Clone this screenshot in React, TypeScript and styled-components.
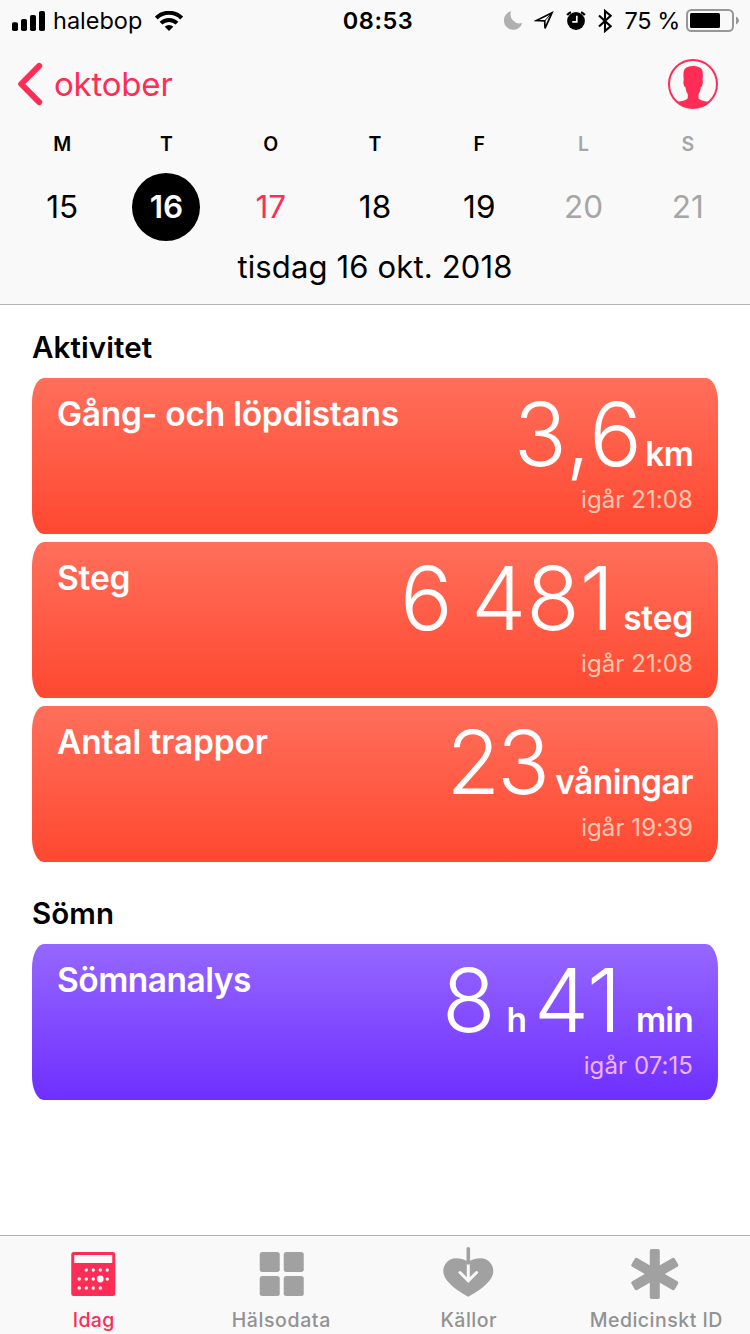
import React from "react";
import styled, { createGlobalStyle } from "styled-components";

const PINK = "#ff2d55";
const GRAY = "#a1a1a1";

const GlobalStyle = createGlobalStyle`
  * { box-sizing: border-box; }
  body {
    margin: 0;
    background: #fff;
    color: #000;
    font-family: Inter, "Liberation Sans", sans-serif;
  }
`;

const Screen = styled.div`
  width: 750px;
  height: 1334px;
  display: flex;
  flex-direction: column;
  overflow: hidden;
  background: #fff;
`;

const Header = styled.header`
  height: 305px;
  flex: none;
  background: #f9f9f9;
  border-bottom: 1px solid #b2b2b2;
`;

const StatusBar = styled.div`
  height: 40px;
  padding: 0 11px 0 12px;
  display: grid;
  grid-template-columns: 1fr auto 1fr;
  align-items: center;
`;

const StatusGroup = styled.div<{ $end?: boolean }>`
  display: flex;
  align-items: center;
  justify-content: ${(p) => (p.$end ? "flex-end" : "flex-start")};
  height: 40px;

  svg { display: block; flex: none; }
`;

const StatusText = styled.span<{ $spacing?: number; $bold?: boolean }>`
  font-size: 23.5px;
  line-height: 41px;
  font-weight: ${(p) => (p.$bold ? 600 : 400)};
  letter-spacing: ${(p) => p.$spacing ?? 0}px;
  white-space: nowrap;
`;

const Carrier = styled(StatusText)`
  margin: 0 13px 0 7px;
`;

const Clock = styled(StatusText)`
  margin-left: 5px;
`;

const Percent = styled(StatusText)`
  margin: 0 6px 0 13px;
`;

const NavBar = styled.nav`
  height: 88px;
  padding: 0 32px 0 17px;
  display: flex;
  align-items: center;
  justify-content: space-between;

  svg { display: block; }
`;

const BackButton = styled.a`
  display: flex;
  align-items: center;
  gap: 11px;
  color: ${PINK};
  font-size: 33px;
  line-height: 88px;
  letter-spacing: -0.2px;
`;

const Week = styled.div`
  height: 113px;
  padding: 0 10px;
  display: grid;
  grid-template-columns: repeat(7, 1fr);
`;

const Day = styled.div<{ $color: string }>`
  display: flex;
  flex-direction: column;
  align-items: center;
  color: ${(p) => p.$color};
`;

const Weekday = styled.span`
  font-size: 19.5px;
  font-weight: 600;
  line-height: 32px;
  margin-bottom: 13px;
`;

const DayNumber = styled.span<{ $selected?: boolean }>`
  width: 68px;
  height: 68px;
  border-radius: 50%;
  text-align: center;
  line-height: 68px;
  font-size: 31.5px;
  letter-spacing: 0;
  font-weight: ${(p) => (p.$selected ? 600 : 400)};
  background: ${(p) => (p.$selected ? "#000" : "transparent")};
  color: ${(p) => (p.$selected ? "#fff" : "inherit")};
`;

const FullDate = styled.div`
  text-align: center;
  font-size: 31px;
  line-height: 52px;
  letter-spacing: 0.15px;
`;

const Content = styled.main`
  flex: 1;
  padding: 0 32px;
`;

const Section = styled.section`
  display: flex;
  flex-direction: column;
  gap: 8px;
`;

const SectionTitle = styled.h2<{ $first?: boolean }>`
  margin: 0;
  padding-top: ${(p) => (p.$first ? 20 : 29)}px;
  font-size: 29.5px;
  font-weight: 590;
  line-height: 45px;
  letter-spacing: 0.1px;
`;

const Card = styled.article<{ $from: string; $to: string }>`
  height: 156px;
  padding: 0 25px;
  display: flex;
  justify-content: space-between;
  border-radius: 12px / 24px;
  background: linear-gradient(${(p) => p.$from}, ${(p) => p.$to});
  color: #fff;
`;

const CardTitle = styled.h3<{ $spacing: number }>`
  margin: 0;
  padding-top: 16px;
  font-size: 33.5px;
  font-weight: 570;
  line-height: 40px;
  letter-spacing: ${(p) => p.$spacing}px;
  white-space: nowrap;
`;

const Reading = styled.div`
  display: flex;
  flex-direction: column;
  align-items: flex-end;
`;

const Amount = styled.div`
  display: flex;
  align-items: baseline;
  height: 106px;
`;

const Figure = styled.span<{ $spacing: number }>`
  font-size: 87.5px;
  font-weight: 300;
  line-height: 113px;
  letter-spacing: ${(p) => p.$spacing}px;
  word-spacing: -6px;
  white-space: pre;
`;

const Unit = styled.span<{ $gap: number; $after: number; $spacing: number }>`
  margin-left: ${(p) => p.$gap}px;
  margin-right: ${(p) => p.$after}px;
  font-size: 33.5px;
  font-weight: 580;
  letter-spacing: ${(p) => p.$spacing}px;
`;

const Recorded = styled.div<{ $color: string }>`
  font-size: 24px;
  font-weight: 400;
  line-height: 32px;
  letter-spacing: 0.08px;
  color: ${(p) => p.$color};
`;

const TabBar = styled.footer`
  height: 99px;
  flex: none;
  display: grid;
  grid-template-columns: repeat(4, 1fr);
  background: #f9f9f9;
  border-top: 1px solid #b2b2b2;
`;

const Tab = styled.div<{ $active?: boolean }>`
  display: flex;
  flex-direction: column;
  align-items: center;
  padding-top: 10px;
  color: ${(p) => (p.$active ? PINK : "#929292")};

  svg { display: block; }
`;

const TabLabel = styled.span<{ $spacing: number }>`
  margin-top: 3px;
  font-size: 19.5px;
  font-weight: 500;
  line-height: 34px;
  letter-spacing: ${(p) => p.$spacing}px;
  white-space: nowrap;
`;

const SignalIcon = () => (
  <svg width="34" height="20" viewBox="0 0 34 20">
    <rect x="0" y="11.3" width="6" height="8.7" rx="1.8" />
    <rect x="9" y="8" width="6" height="12" rx="1.8" />
    <rect x="18" y="4" width="6" height="16" rx="1.8" />
    <rect x="27" y="0" width="6" height="20" rx="1.8" />
  </svg>
);

const WifiIcon = () => (
  <svg width="28" height="20" viewBox="0 0 28 20">
    <g fill="none" stroke="#000" strokeWidth="4">
      <path d="M1.3 7a18 18 0 0 1 25.4 0" />
      <path d="M6 12.2a11.4 11.4 0 0 1 16 0" />
    </g>
    <path d="M14 20l-4.3-4.3a6.3 6.3 0 0 1 8.6 0z" />
  </svg>
);

const MoonIcon = () => (
  <svg width="19" height="19" viewBox="0 0 19 19">
    <path d="M7.2.2A9.4 9.4 0 1 0 18.3 12 9 9 0 0 1 7.2.2z" fill="#b0b0b0" />
  </svg>
);

const LocationIcon = () => (
  <svg width="20" height="20" viewBox="0 0 20 20">
    <path d="M2.500 9.500L18 1.800 11 17.300 10.700 9.900z" fill="none" stroke="#000" strokeWidth="1.700" />
    <path d="M10.700 9.900L18 1.800" fill="none" stroke="#000" strokeWidth="1" />
  </svg>
);

const AlarmIcon = () => (
  <svg width="20" height="19" viewBox="0 0 20 19">
    <circle cx="10" cy="10" r="8.9" />
    <path d="M1.200 4.200A8 8 0 0 1 5 1.200M18.800 4.200A8 8 0 0 0 15 1.200" fill="none" stroke="#000" strokeWidth="2.200" />
    <path d="M10.8 4.800v6H6.2" fill="none" stroke="#f9f9f9" strokeWidth="1.700" />
  </svg>
);

const BluetoothIcon = () => (
  <svg width="14" height="24" viewBox="0 0 14 24">
    <path d="M1 6.4L12.6 17.2 7 22V2l5.6 4.8L1 17.6" fill="none" stroke="#000" strokeWidth="2.100" />
  </svg>
);

const BatteryIcon = () => (
  <svg width="53" height="23" viewBox="0 0 53 23">
    <rect x="1" y="1" width="46" height="21" rx="4.5" fill="none" stroke="#979797" strokeWidth="2" />
    <rect x="4" y="4" width="30" height="15" rx="1.5" />
    <path d="M50 7.4c3.8 1.6 3.8 6.6 0 8.2z" fill="#979797" />
  </svg>
);

const ChevronIcon = () => (
  <svg width="26" height="44" viewBox="0 0 26 44">
    <path d="M22.2 3.900L4.200 22l18 18.100" fill="none" stroke={PINK} strokeWidth="6" strokeLinecap="round" strokeLinejoin="round" />
  </svg>
);

const ProfileIcon = () => (
  <svg width="50" height="50" viewBox="0 0 50 50">
    <circle cx="25" cy="25" r="24" fill="none" stroke={PINK} strokeWidth="2" />
    <path
      d="M25 7c-4 0-7.500 1.300-8.900 4-.9 3-.8 6.500-.3 10-.8.800-.3 5 .7 6.500.3.500.6.700 1 .7.4 3 1 5.200 2.300 7v4c-1.500 2.200-5 2.500-10.500 3.600C13.500 47 19 49 25 49s11.500-2 15.500-6.200c-5.500-1.100-8.500-1.400-10-3.600v-4c1.300-1.800 1.900-4 2.300-7 .4 0 .7-.2 1-.7 1-1.500 1.500-5.700.7-6.500.5-3.500.6-7-.3-10-1.200-2.700-5.200-4-9.200-4z"
      fill={PINK}
    />
  </svg>
);

const CALENDAR_DOTS: [number, number][] = [
  [15, 18], [22, 18], [29, 18], [36, 18],
  [8, 27], [15, 27], [22, 27], [36, 27],
  [8, 36], [15, 36], [22, 36], [29, 36],
];

const TodayIcon = () => (
  <svg width="54" height="54" viewBox="-4.250 -6 54 54">
    <rect width="44" height="44" rx="2.5" fill={PINK} />
    <rect x="3" y="3" width="38" height="8" fill="#f9f9f9" />
    {CALENDAR_DOTS.map(([x, y]) => (
      <circle key={`${x}-${y}`} cx={x} cy={y} r="1.7" fill="#f9f9f9" />
    ))}
    <circle cx="29" cy="27" r="3.4" fill="#f9f9f9" />
  </svg>
);

const DataIcon = () => (
  <svg width="54" height="54" viewBox="-5.750 -6 54 54" fill={GRAY}>
    <rect width="20" height="20" rx="2.5" />
    <rect x="24" width="20" height="20" rx="2.5" />
    <rect y="24" width="20" height="20" rx="2.5" />
    <rect x="24" y="24" width="20" height="20" rx="2.5" />
  </svg>
);

const SourcesIcon = () => (
  <svg width="54" height="54" viewBox="0 0 54 54">
    <path d="M26.300 50.800C17 45.500 1.300 36 1.300 25 1.300 18 7 12.200 13.500 12.200c5.500 0 10 1.200 12.800 4.200 2.800-3 7.300-4.200 12.800-4.200 6.500 0 12.200 5.800 12.200 12.800 0 11-15.700 20.500-25 25.800z" fill={GRAY} />
    <path d="M26.300 17.500v16.500M18 26.500l8.300 8.300 8.300-8.300" fill="none" stroke="#f9f9f9" strokeWidth="3" strokeLinecap="round" />
    <path d="M26.300 2.800V17" fill="none" stroke={GRAY} strokeWidth="3.600" strokeLinecap="round" />
  </svg>
);

const MedicalIcon = () => (
  <svg width="54" height="54" viewBox="0 0 54 54" fill={GRAY}>
    {[0, 60, 120].map((angle) => (
      <rect key={angle} x="20.800" y="3" width="10" height="50" rx="1.800" transform={`rotate(${angle} 25.800 28)`} />
    ))}
  </svg>
);

const DAYS = [
  { name: "M", date: 15, color: "#000" },
  { name: "T", date: 16, color: "#000", selected: true },
  { name: "O", date: 17, color: "#000", today: true },
  { name: "T", date: 18, color: "#000" },
  { name: "F", date: 19, color: "#000" },
  { name: "L", date: 20, color: "#a6a6a6" },
  { name: "S", date: 21, color: "#a6a6a6" },
];

const Today = styled(DayNumber)`
  color: ${PINK};
`;

type Part = { value: string; spacing: number; unit: string; gap: number; after?: number; unitSpacing?: number };
type Entry = { title: string; spacing: number; parts: Part[]; time: string };

const ACTIVITY: Entry[] = [
  { title: "Gång- och löpdistans", spacing: -0.25, parts: [{ value: "3,6", spacing: 1, unit: "km", gap: 2.5, unitSpacing: -0.8 }], time: "igår 21:08" },
  { title: "Steg", spacing: -0.2, parts: [{ value: "6 481", spacing: 0, unit: "steg", gap: 9, unitSpacing: -0.2 }], time: "igår 21:08" },
  { title: "Antal trappor", spacing: -0.15, parts: [{ value: "23", spacing: -3, unit: "våningar", gap: 8, unitSpacing: -0.5 }], time: "igår 19:39" },
];

const SLEEP: Entry[] = [
  {
    title: "Sömnanalys",
    spacing: -0.5,
    parts: [
      { value: "8", spacing: 0, unit: "h", gap: 11, after: 7 },
      { value: "41", spacing: -0.5, unit: "min", gap: 15, unitSpacing: -0.8 },
    ],
    time: "igår 07:15",
  },
];

const EntryCard = ({ entry, from, to, timeColor }: { entry: Entry; from: string; to: string; timeColor: string }) => (
  <Card $from={from} $to={to}>
    <CardTitle $spacing={entry.spacing}>{entry.title}</CardTitle>
    <Reading>
      <Amount>
        {entry.parts.map((part) => (
          <React.Fragment key={part.unit}>
            <Figure $spacing={part.spacing}>{part.value}</Figure>
            <Unit $gap={part.gap} $after={part.after ?? 0} $spacing={part.unitSpacing ?? 0}>{part.unit}</Unit>
          </React.Fragment>
        ))}
      </Amount>
      <Recorded $color={timeColor}>{entry.time}</Recorded>
    </Reading>
  </Card>
);

const StatusIcon = styled.span<{ $left?: number }>`
  margin-left: ${(p) => p.$left ?? 0}px;
`;

export default function App() {
  return (
    <Screen>
      <GlobalStyle />
      <Header>
        <StatusBar>
          <StatusGroup>
            <SignalIcon />
            <Carrier $spacing={0}>halebop</Carrier>
            <WifiIcon />
          </StatusGroup>
          <Clock $bold $spacing={0.5}>08:53</Clock>
          <StatusGroup $end>
            <StatusIcon><MoonIcon /></StatusIcon>
            <StatusIcon $left={11}><LocationIcon /></StatusIcon>
            <StatusIcon $left={12}><AlarmIcon /></StatusIcon>
            <StatusIcon $left={12}><BluetoothIcon /></StatusIcon>
            <Percent $spacing={-0.4}>75 %</Percent>
            <BatteryIcon />
          </StatusGroup>
        </StatusBar>
        <NavBar>
          <BackButton>
            <ChevronIcon />
            oktober
          </BackButton>
          <ProfileIcon />
        </NavBar>
        <Week>
          {DAYS.map((day) => (
            <Day key={day.date} $color={day.color}>
              <Weekday>{day.name}</Weekday>
              {day.today ? <Today>{day.date}</Today> : <DayNumber $selected={day.selected}>{day.date}</DayNumber>}
            </Day>
          ))}
        </Week>
        <FullDate>tisdag 16 okt. 2018</FullDate>
      </Header>
      <Content>
        <Section>
          <SectionTitle $first>Aktivitet</SectionTitle>
          {ACTIVITY.map((entry) => (
            <EntryCard key={entry.title} entry={entry} from="#ff6f5b" to="#ff4830" timeColor="#ffc8b0" />
          ))}
        </Section>
        <Section>
          <SectionTitle>Sömn</SectionTitle>
          {SLEEP.map((entry) => (
            <EntryCard key={entry.title} entry={entry} from="#9667ff" to="#6e2fff" timeColor="#f0b4ff" />
          ))}
        </Section>
      </Content>
      <TabBar>
        <Tab $active>
          <TodayIcon />
          <TabLabel $spacing={0.4}>Idag</TabLabel>
        </Tab>
        <Tab>
          <DataIcon />
          <TabLabel $spacing={0.6}>Hälsodata</TabLabel>
        </Tab>
        <Tab>
          <SourcesIcon />
          <TabLabel $spacing={0.5}>Källor</TabLabel>
        </Tab>
        <Tab>
          <MedicalIcon />
          <TabLabel $spacing={0.5}>Medicinskt ID</TabLabel>
        </Tab>
      </TabBar>
    </Screen>
  );
}
